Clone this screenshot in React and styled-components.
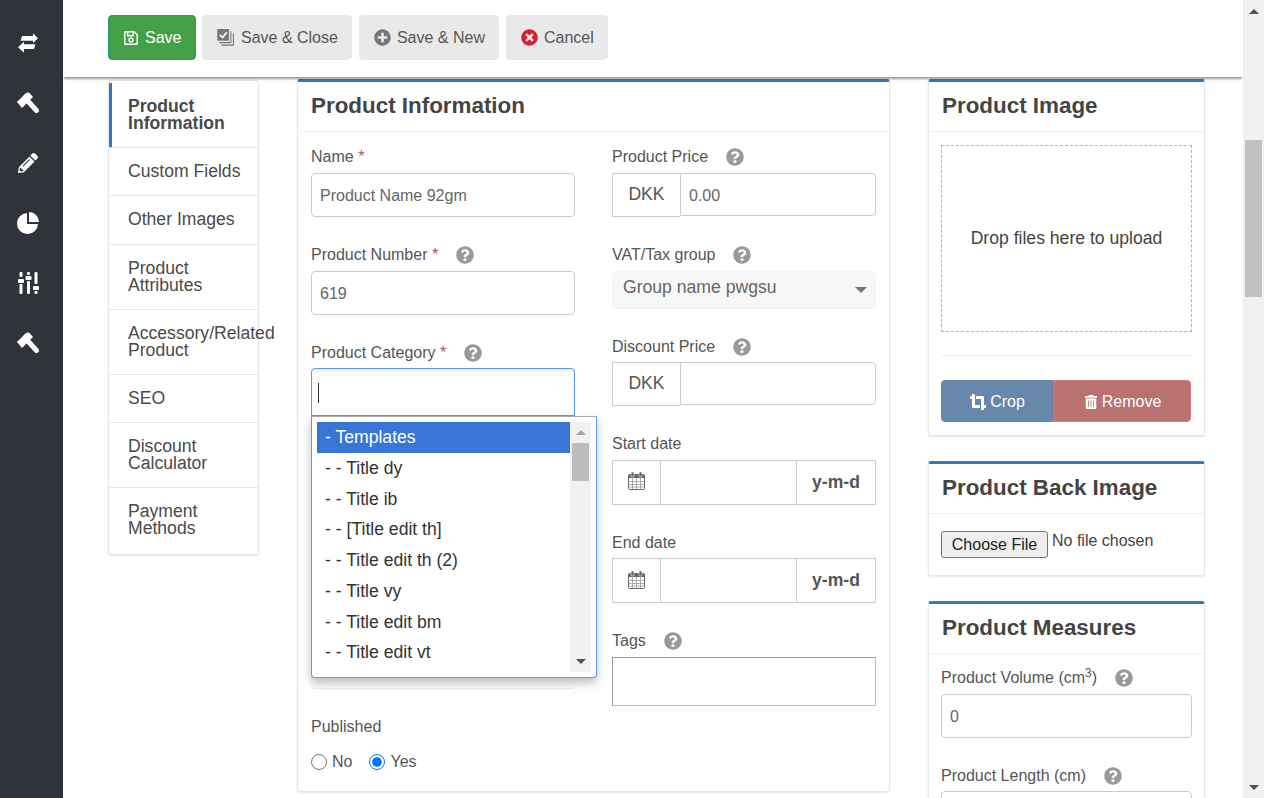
import styled, { createGlobalStyle } from "styled-components";
import { FaPencilAlt, FaRegSave, FaPlusCircle, FaTimesCircle, FaQuestionCircle, FaCropAlt, FaTrashAlt } from "react-icons/fa";

const GlobalStyle = createGlobalStyle`
    * { box-sizing: border-box; }
    html, body { margin: 0; padding: 0; height: 100%; overflow: hidden; }
    body { font-family: "Liberation Sans", Arial, sans-serif; font-size: 16px; color: #555; background: #fff; }
`;

const tabs = [
    "Custom Fields", "Other Images", "Product Attributes", "Accessory/Related Product", "SEO",
    "Discount Calculator", "Payment Methods",
];
const categories = [
    "- - Title dy", "- - Title ib", "- - [Title edit th]", "- - Title edit th (2)", "- - Title vy",
    "- - Title edit bm", "- - Title edit vt",
];

function ExchangeIcon () {
    return (
        <svg width="20" height="20" viewBox="0 0 20 20" fill="#fff">
            <polygon points="4,3 15,3 15,0.3 20,5.3 15,10 15,7.7 2.6,7.7" />
            <polygon points="6,8.7 6,11.3 17.4,11.3 16,16 6,16 6,19.7 0,14.2" />
        </svg>
    );
}

function HammerIcon () {
    return (
        <svg width="22" height="26" viewBox="0 0 22 26" fill="#fff">
            <polygon points="0,12 9,3 12,2.5 16,7 5,18" />
            <path d="M10 10 L19.5 20.5" stroke="#fff" strokeWidth="5" strokeLinecap="round" />
        </svg>
    );
}

function PieIcon () {
    return (
        <svg width="22" height="22" viewBox="0 0 22 22" fill="#fff">
            <path d="M10 1 A10.5 10.5 0 1 0 21 12 H10 Z" />
            <path d="M12 0 A10 10 0 0 1 22 10 H12 Z" />
        </svg>
    );
}

function SlidersIcon () {
    return (
        <svg width="21" height="22" viewBox="0 0 21 22" fill="#fff">
            <rect x="1.5" y="0" width="3" height="5" rx="1" />
            <rect x="0" y="7" width="6" height="4" rx="1" />
            <rect x="1.5" y="12" width="3" height="10" rx="1" />
            <rect x="9" y="0" width="3" height="3" rx="1" />
            <rect x="7.5" y="4" width="6" height="4" rx="1" />
            <rect x="9" y="9" width="3" height="13" rx="1" />
            <rect x="16.5" y="0" width="3" height="12" rx="1" />
            <rect x="15" y="14" width="6" height="4" rx="1" />
            <rect x="16.5" y="19" width="3" height="3" rx="1" />
        </svg>
    );
}

function StackCheckIcon () {
    return (
        <svg width="17.5" height="17" viewBox="0 0 16 16" fill="none">
            <rect x="0" y="0" width="11" height="11" fill="#777" />
            <path d="M2.5 5.5 L5 8 L9 3" stroke="#fff" strokeWidth="1.6" />
            <path d="M12.8 2 V12.8 H2" stroke="#777" />
            <path d="M15.2 4 V15.2 H4" stroke="#777" />
        </svg>
    );
}

function CalendarIcon () {
    return (
        <svg width="17" height="18" viewBox="0 0 17 18" fill="none">
            <rect x="0.5" y="2.5" width="16" height="15" rx="1" fill="#fff" stroke="#666" />
            <rect x="0.5" y="2.5" width="16" height="3.5" fill="#666" />
            <rect x="3" y="0" width="3" height="5" rx="1.2" fill="#666" stroke="#fff" strokeWidth="0.6" />
            <rect x="11" y="0" width="3" height="5" rx="1.2" fill="#666" stroke="#fff" strokeWidth="0.6" />
            <path d="M0.5 9.5 H16.5 M0.5 12.5 H16.5 M0.5 15 H16.5 M4.5 6 V17.5 M8.5 6 V17.5 M12.5 6 V17.5" stroke="#999" strokeWidth="0.8" />
        </svg>
    );
}

function Help () {
    return <HelpIcon><FaQuestionCircle /></HelpIcon>;
}

export default function App () {
    return (
        <Page>
            <GlobalStyle />
            <SideBar>
                <SideIcon><ExchangeIcon /></SideIcon>
                <SideIcon><HammerIcon /></SideIcon>
                <SideIcon><FaPencilAlt size={20} /></SideIcon>
                <SideIcon><PieIcon /></SideIcon>
                <SideIcon><SlidersIcon /></SideIcon>
                <SideIcon><HammerIcon /></SideIcon>
            </SideBar>

            <Main>
                <Toolbar>
                    <ActionButton $primary><FaRegSave size={16} />Save</ActionButton>
                    <ActionButton><StackCheckIcon />Save &amp; Close</ActionButton>
                    <ActionButton><FaPlusCircle size={17} color="#777" />Save &amp; New</ActionButton>
                    <ActionButton><FaTimesCircle size={17} color="#dc1c2e" />Cancel</ActionButton>
                </Toolbar>

                <Content>
                    <TabList>
                        <TabItem $active>Product Information</TabItem>
                        {tabs.map(t => <TabItem key={t}>{t}</TabItem>)}
                    </TabList>

                    <InfoPanel>
                        <PanelTitle>Product Information</PanelTitle>
                        <FormColumns>
                            <div>
                                <Field>
                                    <Label>Name <Req>*</Req></Label>
                                    <TextInput defaultValue="Product Name 92gm" />
                                </Field>
                                <Field>
                                    <Label>Product Number <Req>*</Req><Help /></Label>
                                    <TextInput defaultValue="619" />
                                </Field>
                                <CategoryField>
                                    <Label>Product Category <Req>*</Req><Help /></Label>
                                    <SearchBox><Caret /></SearchBox>
                                    <Dropdown>
                                        <OptionList>
                                            <Option $selected>- Templates</Option>
                                            {categories.map(c => <Option key={c}>{c}</Option>)}
                                        </OptionList>
                                        <ListScroll>
                                            <ArrowUp $color="#a3a3a3" />
                                            <ListThumb />
                                            <ArrowDown $color="#505050" />
                                        </ListScroll>
                                    </Dropdown>
                                </CategoryField>
                                <SelectBox $hidden />
                                <Label>Published</Label>
                                <RadioRow>
                                    <RadioLabel><input type="radio" name="published" />No</RadioLabel>
                                    <RadioLabel><input type="radio" name="published" defaultChecked />Yes</RadioLabel>
                                </RadioRow>
                            </div>
                            <div>
                                <Field>
                                    <Label>Product Price<Help /></Label>
                                    <InputGroup>
                                        <Addon>DKK</Addon>
                                        <GroupInput defaultValue="0.00" />
                                    </InputGroup>
                                </Field>
                                <Field>
                                    <Label>VAT/Tax group<Help /></Label>
                                    <SelectBox>Group name pwgsu<SelectArrow /></SelectBox>
                                </Field>
                                <Field>
                                    <Label>Discount Price<Help /></Label>
                                    <InputGroup>
                                        <Addon>DKK</Addon>
                                        <GroupInput />
                                    </InputGroup>
                                </Field>
                                <Field>
                                    <Label>Start date</Label>
                                    <DateGroup>
                                        <DateIcon><CalendarIcon /></DateIcon>
                                        <DateInput />
                                        <DateFormat>y-m-d</DateFormat>
                                    </DateGroup>
                                </Field>
                                <Field>
                                    <Label>End date</Label>
                                    <DateGroup>
                                        <DateIcon><CalendarIcon /></DateIcon>
                                        <DateInput />
                                        <DateFormat>y-m-d</DateFormat>
                                    </DateGroup>
                                </Field>
                                <Label>Tags<Help /></Label>
                                <TagsBox />
                            </div>
                        </FormColumns>
                    </InfoPanel>

                    <SideColumn>
                        <Panel>
                            <PanelTitle>Product Image</PanelTitle>
                            <ImageBody>
                                <DropZone>Drop files here to upload</DropZone>
                                <Rule />
                                <ImageButtons>
                                    <CropButton><FaCropAlt size={16} />Crop</CropButton>
                                    <RemoveButton><FaTrashAlt size={14} />Remove</RemoveButton>
                                </ImageButtons>
                            </ImageBody>
                        </Panel>
                        <Panel>
                            <PanelTitle>Product Back Image</PanelTitle>
                            <FileRow>
                                <FileButton>Choose File</FileButton>
                                <span>No file chosen</span>
                            </FileRow>
                        </Panel>
                        <Panel>
                            <PanelTitle>Product Measures</PanelTitle>
                            <MeasureBody>
                                <Field>
                                    <Label>Product Volume (cm<Sup>3</Sup>)<Help /></Label>
                                    <TextInput defaultValue="0" />
                                </Field>
                                <Field>
                                    <Label>Product Length (cm)<Help /></Label>
                                    <TextInput />
                                </Field>
                            </MeasureBody>
                        </Panel>
                    </SideColumn>
                </Content>
            </Main>

            <PageScroll>
                <ArrowBox><ArrowUp $color="#505050" /></ArrowBox>
                <PageThumb />
                <ArrowBottom><ArrowDown $color="#505050" /></ArrowBottom>
            </PageScroll>
        </Page>
    );
}

const Page = styled.div`
    display: flex;
    width: 100vw;
    height: 798px;
    overflow: hidden;
`
const SideBar = styled.nav`
    width: 63px;
    flex: none;
    background-color: #30343a;
    display: flex;
    flex-direction: column;
    padding-top: 13px;
    padding-right: 7px;
`
const SideIcon = styled.div`
    height: 60px;
    display: flex;
    align-items: center;
    justify-content: center;
    color: #fff;
`
const Main = styled.div`
    flex: 1;
    min-width: 0;
    display: flex;
    flex-direction: column;
`
const Toolbar = styled.div`
    height: 77px;
    flex: none;
    display: flex;
    align-items: flex-start;
    gap: 6.5px;
    padding: 15px 0 0 45px;
    background-color: #fff;
    box-shadow: 0 3px 2px -1px rgba(0, 0, 0, 0.4);
    position: relative;
    z-index: 2;
`
const ActionButton = styled.button`
    height: 45px;
    display: flex;
    align-items: center;
    gap: 6px;
    padding: 0 13.5px 0 14px;
    font-family: inherit;
    font-size: 16px;
    border-radius: 4px;
    border: 1px solid ${props => props.$primary ? "#1f9d78" : "#e9e9e9"};
    background-color: ${props => props.$primary ? "#43a047" : "#e9e9e9"};
    color: ${props => props.$primary ? "#fff" : "#555"};
`
const Content = styled.div`
    flex: 1;
    min-height: 0;
    display: flex;
    align-items: flex-start;
    gap: 38px;
    padding: 2px 38px 0 45px;
`
const TabList = styled.ul`
    width: 151px;
    flex: none;
    list-style: none;
    margin: 1px 0 0;
    padding: 2px 0 1px;
    background-color: #fff;
    border: 1px solid #e6e6e6;
    border-radius: 3px;
    box-shadow: 0 1px 2px rgba(0, 0, 0, 0.1);
`
const TabItem = styled.li`
    font-size: 17.6px;
    line-height: 17px;
    padding: 15.1px 0 15.1px ${props => props.$active ? "16px" : "19px"};
    border-left: ${props => props.$active ? "3px solid #337ab7" : "0"};
    font-weight: ${props => props.$active ? "bold" : "normal"};
    color: #4a4a4a;
    box-shadow: 0 1px 0 #e6e6e6;
    margin-bottom: 1px;
    &:last-child { box-shadow: none; margin-bottom: 0; }
`
const Panel = styled.section`
    background-color: #fff;
    border: 1px solid #e8e8e8;
    border-top: 3px solid #337ab7;
    border-radius: 3px;
    box-shadow: 0 1px 2px rgba(0, 0, 0, 0.1);
`
const InfoPanel = styled(Panel)`
    width: 593px;
    flex: none;
    height: 713px;
`
const SideColumn = styled.div`
    width: 277px;
    flex: none;
    display: flex;
    flex-direction: column;
    gap: 25px;
`
const PanelTitle = styled.h2`
    margin: 0;
    height: 50px;
    padding-left: 13px;
    font-size: 22.4px;
    line-height: 48px;
    font-weight: bold;
    color: #444;
    border-bottom: 1px solid #f1f1f1;
`
const ImageBody = styled.div`
    padding: 13px 12px 13px;
`
const MeasureBody = styled.div`
    padding: 14px 12px 0;
`
const FormColumns = styled.div`
    display: grid;
    grid-template-columns: 264px 264px;
    column-gap: 37px;
    padding: 15.4px 13px 0;
`
const Field = styled.div`
    margin-bottom: 28px;
`
const CategoryField = styled(Field)`
    position: relative;
    margin-bottom: 0;
`
const Label = styled.label`
    display: block;
    height: 25.6px;
    line-height: 20px;
    color: #555;
`
const Req = styled.span`
    color: #a05a58;
`
const Sup = styled.sup`
    font-size: 12px;
    line-height: 0;
`
const HelpIcon = styled.span`
    display: inline-block;
    margin-left: 18px;
    color: #999;
    font-size: 18px;
    vertical-align: -4px;
    line-height: 1;
`
const TextInput = styled.input`
    display: block;
    width: 100%;
    height: 44px;
    padding: 2px 8px 0;
    font-family: inherit;
    font-size: 16px;
    color: #666;
    background-color: #fff;
    border: 1px solid #ccc;
    border-radius: 4px;
`
const SearchBox = styled.div`
    height: 48px;
    padding: 14px 6px;
    background-color: #fff;
    border: 1px solid #5897fb;
    border-radius: 4px 4px 0 0;
    box-shadow: inset 0 2px 3px rgba(0, 0, 0, 0.08);
`
const Caret = styled.div`
    width: 1px;
    height: 20px;
    background-color: #333;
`
const Dropdown = styled.div`
    position: absolute;
    top: 73.5px;
    left: 0;
    width: 286px;
    height: 262px;
    display: flex;
    align-items: flex-start;
    padding: 5px;
    background-color: #fff;
    border: 1px solid #5897fb;
    border-top-color: #aaa;
    border-radius: 0 0 4px 4px;
    box-shadow: 0 5px 10px rgba(0, 0, 0, 0.25);
    z-index: 1;
`
const OptionList = styled.ul`
    list-style: none;
    margin: 0;
    padding: 0;
    width: 253px;
    flex: none;
`
const Option = styled.li`
    height: 30.75px;
    line-height: 30px;
    padding-left: 8px;
    font-size: 17.6px;
    color: ${props => props.$selected ? "#fff" : "#333"};
    background-color: ${props => props.$selected ? "#3875d7" : "#fff"};
`
const ListScroll = styled.div`
    width: 21px;
    height: 250px;
    flex: none;
    background-color: #f1f1f1;
    display: flex;
    flex-direction: column;
    align-items: center;
    padding-top: 8px;
`
const ListThumb = styled.div`
    width: 17px;
    height: 38px;
    margin-top: 8px;
    background-color: #bdbdbd;
`
const ArrowUp = styled.div`
    width: 0;
    height: 0;
    border-left: 5px solid transparent;
    border-right: 5px solid transparent;
    border-bottom: 5px solid ${props => props.$color};
`
const ArrowDown = styled.div`
    width: 0;
    height: 0;
    margin-top: auto;
    margin-bottom: 8px;
    border-left: 5px solid transparent;
    border-right: 5px solid transparent;
    border-top: 5px solid ${props => props.$color};
`
const SelectBox = styled.div`
    height: 38px;
    margin-top: ${props => props.$hidden ? "235px" : "0"};
    margin-bottom: ${props => props.$hidden ? "28px" : "0"};
    padding: 0 0 3px 11px;
    display: flex;
    align-items: center;
    justify-content: space-between;
    font-size: 17.6px;
    color: #666;
    background-color: ${props => props.$hidden ? "#fdfdfd" : "#f7f7f7"};
    border-bottom: 1px solid #eee;
    border-radius: 4px;
`
const SelectArrow = styled.span`
    width: 0;
    height: 0;
    margin: 4px 9px 0 0;
    border-left: 6.5px solid transparent;
    border-right: 6.5px solid transparent;
    border-top: 6.5px solid #777;
`
const RadioRow = styled.div`
    display: flex;
    gap: 17px;
    margin-top: 9px;
`
const RadioLabel = styled.label`
    display: flex;
    align-items: center;
    gap: 5px;
    height: 20px;
    color: #555;
    input {
        width: 16px;
        height: 16px;
        margin: 0;
    }
`
const InputGroup = styled.div`
    display: flex;
    height: 44px;
`
const Addon = styled.div`
    width: 68px;
    flex: none;
    padding-bottom: 1px;
    display: flex;
    align-items: center;
    justify-content: center;
    font-size: 17.6px;
    color: #555;
    border: 1px solid #ccc;
    border-right: 0;
`
const GroupInput = styled.input`
    flex: 1;
    min-width: 0;
    height: 43px;
    padding: 3px 8px 0;
    font-family: inherit;
    font-size: 16px;
    color: #666;
    border: 1px solid #ccc;
    border-radius: 0 4px 4px 0;
`
const DateGroup = styled.div`
    display: flex;
    height: 45px;
    border: 1px solid #ccc;
`
const DateIcon = styled.div`
    width: 48px;
    flex: none;
    padding-bottom: 2px;
    display: flex;
    align-items: center;
    justify-content: center;
    border-right: 1px solid #ccc;
`
const DateInput = styled.input`
    flex: 1;
    min-width: 0;
    border: 0;
`
const DateFormat = styled.div`
    width: 79px;
    flex: none;
    display: flex;
    align-items: center;
    justify-content: center;
    font-weight: bold;
    font-size: 17.6px;
    color: #555;
    border-left: 1px solid #ccc;
`
const TagsBox = styled.div`
    height: 49px;
    border: 1px solid #999;
    border-right-color: #bbb;
    border-bottom-color: #bbb;
`
const DropZone = styled.div`
    height: 187px;
    display: flex;
    align-items: center;
    justify-content: center;
    font-size: 17.6px;
    color: #444;
    border: 1px dashed #b5b5b5;
`
const Rule = styled.hr`
    margin: 23px 0 24px;
    border: 0;
    border-top: 1px solid #eee;
`
const ImageButtons = styled.div`
    display: flex;
    width: 250px;
    height: 42px;
`
const ImageButton = styled.button`
    display: flex;
    align-items: center;
    justify-content: center;
    gap: 4px;
    padding: 1px 0 0;
    font-family: inherit;
    font-size: 16px;
    color: #fff;
`
const CropButton = styled(ImageButton)`
    width: 113px;
    background-color: #6787ab;
    border: 1px solid #6787ab;
    border-radius: 4px 0 0 4px;
`
const RemoveButton = styled(ImageButton)`
    width: 137px;
    background-color: #b97270;
    border: 1px solid #d9797c;
    border-radius: 0 4px 4px 0;
`
const FileRow = styled.div`
    display: flex;
    align-items: flex-start;
    gap: 4px;
    height: 61px;
    padding: 17px 12px 0;
    color: #444;
    line-height: 20px;
`
const FileButton = styled.button`
    height: 27px;
    width: 107px;
    padding: 0;
    font-family: inherit;
    font-size: 16px;
    color: #222;
    background-color: #efefef;
    border: 1px solid #767676;
    border-radius: 3px;
`
const PageScroll = styled.div`
    width: 21px;
    flex: none;
    background-color: #f1f1f1;
    display: flex;
    flex-direction: column;
    align-items: center;
`
const ArrowBox = styled.div`
    padding-top: 9px;
`
const ArrowBottom = styled.div`
    margin-top: auto;
    height: 17px;
    display: flex;
`
const PageThumb = styled.div`
    width: 17px;
    height: 157px;
    margin-top: 126px;
    background-color: #c1c1c1;
`
